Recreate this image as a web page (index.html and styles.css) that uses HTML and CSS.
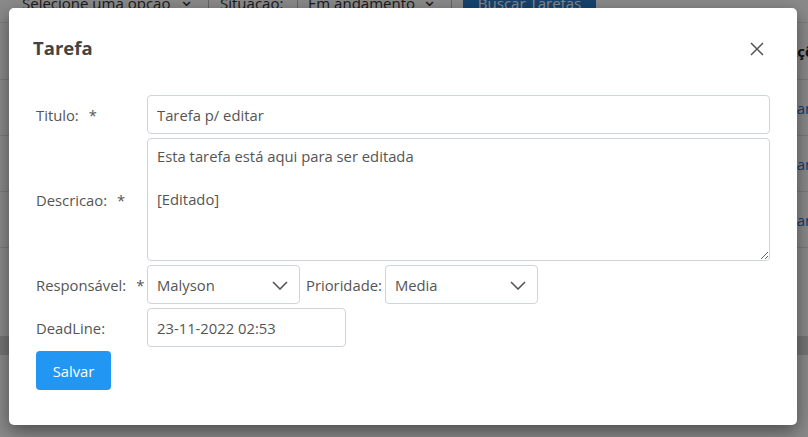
FILE: index.html
```html
<!DOCTYPE html>
<html lang="pt-BR">
<head>
<meta charset="utf-8">
<title>Tarefa</title>
<link rel="stylesheet" href="styles.css">
</head>
<body>
<div class="page">
  <div class="filters">
    <div class="fsel fsel-1"><span>Selecione uma opção</span><span class="fchev">&#8964;</span></div>
    <div class="flabel">Situação:</div>
    <div class="fsel fsel-2"><span>Em andamento</span><span class="fchev">&#8964;</span></div>
    <div class="fbtn">Buscar Tarefas</div>
  </div>
  <div class="trow thead"><div class="tfill"></div><div class="tact"><b>Ações</b></div></div>
  <div class="trow"><div class="tfill"></div><div class="tact"><a>Editar</a> <span class="sep">|</span> <a>Excluir</a></div></div>
  <div class="trow"><div class="tfill"></div><div class="tact"><a>Editar</a> <span class="sep">|</span> <a>Excluir</a></div></div>
  <div class="trow"><div class="tfill"></div><div class="tact"><a>Editar</a> <span class="sep">|</span> <a>Excluir</a></div></div>
  <div class="band"></div>
</div>
<div class="backdrop"></div>
<div class="modal">
  <div class="modal-header">
    <h2 class="modal-title">Tarefa</h2>
    <button class="close" aria-label="Fechar">
      <svg width="14" height="14" viewBox="0 0 14 14"><path d="M1 1 L13 13 M13 1 L1 13" stroke="#555" stroke-width="1.5" fill="none"/></svg>
    </button>
  </div>
  <div class="modal-body">
    <div class="row">
      <label class="lbl">Titulo:<span class="req">*</span></label>
      <input class="ctl ctl-full" type="text" value="Tarefa p/ editar">
    </div>
    <div class="row">
      <label class="lbl">Descricao:<span class="req">*</span></label>
      <textarea class="ctl ctl-full ta">Esta tarefa está aqui para ser editada

[Editado]</textarea>
    </div>
    <div class="row">
      <label class="lbl">Responsável:<span class="req">*</span></label>
      <div class="ctl sel"><span>Malyson</span><svg class="chev" width="16" height="9" viewBox="0 0 16 9"><path d="M1 1 L8 8 L15 1" stroke="#555" stroke-width="1.6" fill="none"/></svg></div>
      <label class="lbl-inline">Prioridade:</label>
      <div class="ctl sel"><span>Media</span><svg class="chev" width="16" height="9" viewBox="0 0 16 9"><path d="M1 1 L8 8 L15 1" stroke="#555" stroke-width="1.6" fill="none"/></svg></div>
    </div>
    <div class="row">
      <label class="lbl">DeadLine:</label>
      <input class="ctl ctl-date" type="text" value="23-11-2022 02:53">
    </div>
    <div class="row">
      <button class="btn">Salvar</button>
    </div>
  </div>
</div>
</body>
</html>
```
FILE: styles.css
```css
* { box-sizing: border-box; }
html, body { margin: 0; padding: 0; }
body {
  width: 808px;
  height: 437px;
  overflow: hidden;
  background: #fff;
  font-family: "Open Sans", "Noto Sans", sans-serif;
  color: #555;
  position: relative;
}
.page { width: 808px; overflow: hidden; }
.filters {
  display: flex;
  align-items: center;
  height: 39px;
  margin-top: -16px;
  border-bottom: 1px solid #e4e4e4;
  font-size: 15px;
  color: #333;
}
.fsel {
  display: flex;
  align-items: center;
  justify-content: space-between;
  height: 100%;
  flex: none;
  border-right: 1px solid #bbb;
}
.fsel-1 { width: 209px; padding: 0 14px 0 22px; }
.fsel-2 { width: 154px; padding: 0 14px 0 10px; }
.flabel {
  width: 89px;
  flex: none;
  padding-left: 11px;
  height: 100%;
  display: flex;
  align-items: center;
  border-right: 1px solid #bbb;
}
.fchev { font-size: 18px; line-height: 1; margin-top: -8px; }
.fbtn {
  margin-left: 11px;
  width: 133px;
  flex: none;
  height: 100%;
  background: #2a7ccc;
  color: #fff;
  display: flex;
  align-items: center;
  justify-content: center;
}
.trow {
  display: flex;
  height: 56px;
  border-bottom: 1px solid #e4e4e4;
  font-size: 15px;
  align-items: center;
}
.thead { height: 57px; color: #222; }
.tfill { flex: 1; }
.tact { width: 38px; flex: none; white-space: nowrap; }
.thead .tact { padding-left: 17px; }
.tact a { color: #1a73c8; }
.tact .sep { color: #6a4a2a; }
.band { margin-top: 88px; height: 19px; background: #d8d8d8; }

.backdrop {
  position: absolute;
  inset: 0;
  background: rgba(0, 0, 0, 0.46);
}
.modal {
  position: absolute;
  left: 9px;
  top: 8px;
  width: 788px;
  height: 417px;
  background: #fff;
  border-radius: 5px;
  box-shadow: 0 6px 18px rgba(0, 0, 0, 0.45);
}
.modal-header {
  display: flex;
  align-items: center;
  justify-content: space-between;
  height: 79px;
  padding: 0 33px 0 24px;
}
.modal-title {
  margin: 0;
  font-size: 18.5px;
  font-weight: 700;
  color: #444;
}
.close {
  border: 0;
  background: none;
  padding: 0;
  width: 14px;
  height: 14px;
  display: flex;
  margin-top: 2px;
}
.modal-body {
  padding: 8px 27px 0 27px;
  display: flex;
  flex-direction: column;
  gap: 4px;
}
.row {
  display: flex;
  align-items: center;
}
.lbl {
  width: 111px;
  flex: none;
  font-size: 14.8px;
  color: #555;
}
.req { margin-left: 10px; }
.lbl-inline {
  margin: 0 3px 0 6px;
  font-size: 14.8px;
  color: #555;
}
.ctl {
  height: 39px;
  border: 1px solid #ced4da;
  border-radius: 4px;
  padding: 0 9px;
  font-family: inherit;
  font-size: 14.8px;
  color: #555;
  background: #fff;
  outline: none;
}
.ctl-full { flex: 1; }
.ta {
  height: 123px;
  padding: 7px 9px;
  line-height: 21.5px;
  resize: vertical;
}
.ctl-date { width: 199px; }
.sel {
  width: 153px;
  flex: none;
  display: flex;
  align-items: center;
  justify-content: space-between;
  padding: 0 11px 0 9px;
}
.chev { margin-top: 1px; }
.btn {
  width: 75px;
  height: 39px;
  border: 0;
  border-radius: 4px;
  background: #2196f3;
  color: #fff;
  font-family: inherit;
  font-size: 14.8px;
}
```
